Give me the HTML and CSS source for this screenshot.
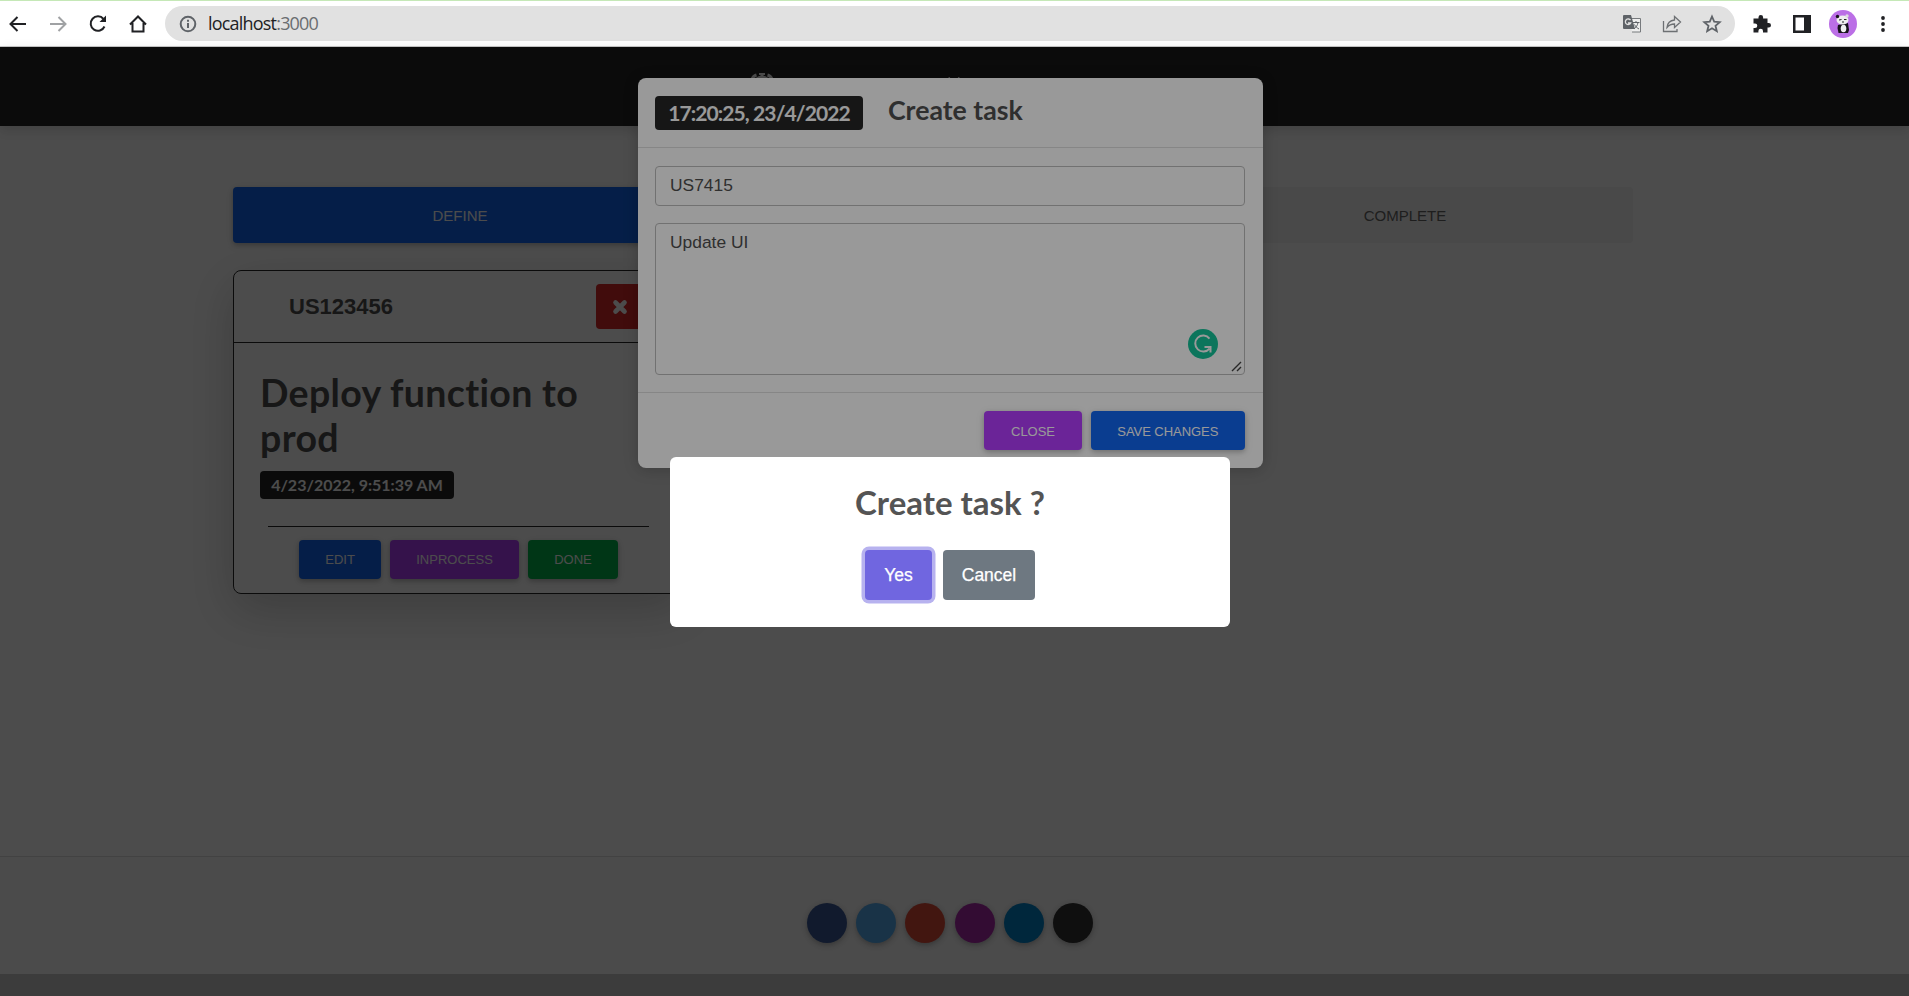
FILE: index.html
```html
<!DOCTYPE html>
<html lang="en">
<head>
<meta charset="utf-8">
<title>Task board</title>
<link rel="stylesheet" href="styles.css">
</head>
<body>
<header class="toolbar">
  <div class="nav-icons">
    <svg width="20" height="20" viewBox="0 0 20 20" class="ic"><path d="M18 10H3M9.500 3L2.500 10l7 7"/></svg>
    <svg width="20" height="20" viewBox="0 0 20 20" class="ic faded"><path d="M2 10h15M10.500 3l7 7-7 7"/></svg>
    <svg width="20" height="20" viewBox="0 0 20 20" class="ic"><path d="M16.500 12.500A7.200 7.200 0 1 1 15.500 5"/><path class="fill" d="M18 1.500V8h-6.500z"/></svg>
    <svg width="20" height="20" viewBox="0 0 20 20" class="ic"><path d="M2 10.500l8-8 8 8M4.500 9v8.500h11V9"/></svg>
  </div>
  <div class="address">
    <svg width="18" height="18" viewBox="0 0 18 18" class="ic grey"><circle cx="9" cy="9" r="7.300"/><path d="M9 8v5M9 4.800v2"/></svg>
    <span class="url">localhost<span class="port">:3000</span></span>
    <svg class="address-icon" width="20" height="20" viewBox="0 0 20 20"><path d="M8 4.500h10.500v13.500H10" fill="#eee" stroke="#777a7d"/><path d="M2 1h7l4 14H2a1 1 0 0 1-1-1V2a1 1 0 0 1 1-1z" fill="#5f6368"/><path d="M8.500 6.200A2.800 2.800 0 1 0 8.700 9H6" fill="none" stroke="#e1e1e1" stroke-width="1.300"/><path d="M11 8.500h6.500M14 7v1.500M16 8.500c-.5 3-2 5-4 6.500M12.500 10.500c1 2 2 3 4.500 4.500" fill="none" stroke="#5f6368"/></svg>
    <svg class="address-icon ic thin" width="20" height="20" viewBox="0 0 20 20"><path d="M1.500 7v10.500H15V15M5 13.500c.5-5 3-7 7.500-7.500V2.500L18.500 8l-6 5.500V10c-3.500 0-5.500 1-7.500 3.500z"/></svg>
    <svg class="address-icon ic grey" width="20" height="20" viewBox="0 0 20 20"><path stroke-width="1.800" d="M10 2.500l2.200 5.100 5.500.5-4.200 3.700 1.300 5.400L10 14.300l-4.800 2.900 1.300-5.400L2.300 8.100l5.500-.5z"/></svg>
  </div>
  <div class="ext-icons">
    <svg width="20" height="20" viewBox="0 0 20 20"><path fill="#202124" d="M2 4.500h4.500V3.300a2.300 2.300 0 0 1 4.600 0v1.200H15.500V9h1.200a2.300 2.300 0 0 1 0 4.600h-1.200V18.500H11V17a2.300 2.300 0 0 0-4.600 0v1.500H1.500V14H3a2.300 2.300 0 0 0 0-4.600H1.500V4.500z"/></svg>
    <svg width="20" height="20" viewBox="0 0 20 20"><path fill="#202124" fill-rule="evenodd" d="M1 1h18v18H1zM3.500 3.500v13h8.500v-13z"/></svg>
    <svg width="28" height="28" viewBox="0 0 28 28"><circle cx="14" cy="14" r="14" fill="#bb6fe6"/><path d="M9 15l10-2 1 7-1 3H9.500L8.500 18z" fill="#17131a"/><ellipse cx="13.500" cy="10" rx="6" ry="4.500" fill="#eee"/><circle cx="8.500" cy="6.500" r="1.700" fill="#17131a"/><circle cx="18" cy="6" r="1.700" fill="#ddd"/><ellipse cx="14.500" cy="18.500" rx="2.800" ry="3.800" fill="#f1f1f1"/><path d="M10 10l2.500-.5M15 9.500h2.500M13 12h2" stroke="#222"/></svg>
    <svg width="20" height="20" viewBox="0 0 20 20" fill="#202124"><circle cx="10" cy="4" r="1.900"/><circle cx="10" cy="10" r="1.900"/><circle cx="10" cy="16" r="1.900"/></svg>
  </div>
</header>

<div class="page">
  <nav class="navbar">
    <svg width="24" height="24" viewBox="0 0 24 24" fill="#fff"><path d="M9 0h6v2h-1.500v2h-3V2H9z"/><circle cx="12" cy="12" r="9.500"/><path d="M2 6A7 7 0 0 1 6.500 2M17.500 2A7 7 0 0 1 22 6" fill="none" stroke="#fff" stroke-width="3"/></svg>
    <svg width="16" height="14" viewBox="0 0 16 14"><path d="M3 0l3 7M13 0l-3 7" stroke="#fff" stroke-width="1.500"/></svg>
  </nav>
  <main class="board">
    <div class="tabs">
      <div class="tab active">DEFINE</div>
      <div class="tab">IN PROCESS</div>
      <div class="tab">COMPLETE</div>
    </div>
    <article class="card">
      <div class="card-header">
        <span class="card-id">US123456</span>
        <button class="delete"><svg width="16" height="16" viewBox="0 0 16 16"><path d="M3.500 3.500l9 9M12.500 3.500l-9 9" stroke="#fff" stroke-width="4.600" stroke-linecap="round"/></svg></button>
      </div>
      <div class="card-body">
        <h1 class="card-title">Deploy function to prod</h1>
        <span class="badge">4/23/2022, 9:51:39 AM</span>
        <div class="card-actions">
          <button class="btn primary">EDIT</button>
          <button class="btn secondary">INPROCESS</button>
          <button class="btn success">DONE</button>
        </div>
      </div>
    </article>
  </main>
  <footer class="footer">
    <div class="socials">
      <i class="dot facebook"></i><i class="dot twitter"></i><i class="dot google"></i><i class="dot instagram"></i><i class="dot linkedin"></i><i class="dot github"></i>
    </div>
    <div class="copyright"></div>
  </footer>

  <div class="backdrop">
    <section class="modal">
      <div class="modal-header">
        <span class="badge large">17:20:25, 23/4/2022</span>
        <h5 class="modal-title">Create task</h5>
      </div>
      <div class="modal-body">
        <div class="field">US7415</div>
        <div class="field area">Update UI
          <svg class="grammar" width="30" height="30" viewBox="0 0 30 30"><circle cx="15" cy="15" r="15" fill="#15c39a"/><path d="M21.500 9.500A8 8 0 1 0 21.500 19.500M16.500 18h6v5.500" fill="none" stroke="#fff" stroke-width="2"/></svg>
          <svg class="grip" width="11" height="11" viewBox="0 0 11 11"><path d="M1 10l9-9M6 10l4-4" stroke="#444" stroke-width="1.400"/></svg>
        </div>
      </div>
      <div class="modal-footer">
        <button class="btn secondary">CLOSE</button>
        <button class="btn primary">SAVE CHANGES</button>
      </div>
    </section>
  </div>

  <div class="confirm-layer">
    <section class="confirm">
      <h2 class="confirm-title">Create task ?</h2>
      <div class="confirm-actions">
        <button class="confirm-btn yes">Yes</button>
        <button class="confirm-btn cancel">Cancel</button>
      </div>
    </section>
  </div>
</div>
</body>
</html>
```
FILE: styles.css
```css
* { box-sizing: border-box; }
body { margin: 0; height: 996px; overflow: hidden; display: flex; flex-direction: column; background: #fff; color: #4f4f4f; font-family: "Liberation Sans", Arial, sans-serif; }
button { font-family: inherit; border: 0; padding: 0; margin: 0; }
svg { display: block; flex: none; }
h1, h2, h5 { margin: 0; font-family: Lato, sans-serif; font-variant-ligatures: none; }

.toolbar { flex: none; height: 47px; display: flex; align-items: center; border-top: 1px solid #c5e8b7; border-bottom: 1px solid #c8c8c8; }
.nav-icons { display: flex; gap: 20px; padding-left: 8px; width: 165px; }
.ic { fill: none; stroke: #202124; stroke-width: 2; }
.ic .fill { fill: #202124; stroke: none; }
.faded { stroke: #a0a2a4; }
.grey { stroke: #5f6368; }
.thin { stroke: #6d7073; stroke-width: 1.3; }
.address { width: 1570px; height: 35px; border-radius: 18px; background: #e1e1e1; display: flex; align-items: center; padding: 0 13px 0 14px; }
.url { flex: 1; margin-left: 11px; padding-bottom: 1px; font: 18px "Open Sans", sans-serif; letter-spacing: -.8px; color: #202124; }
.port { color: #6a6d70; }
.address-icon { margin-left: 20px; }
.ext-icons { display: flex; align-items: center; gap: 20px; padding-left: 17px; }
.ext-icons svg:nth-child(3) { margin: 0 -4px 0 -3px; }

.page { position: relative; flex: 1; display: flex; flex-direction: column; }
.navbar { height: 79px; background: #262626; box-shadow: 0 4px 12px rgba(0,0,0,.15); display: flex; gap: 172px; padding: 26px 0 0 750px; }
.navbar svg + svg { margin-top: 4px; }
.board { flex: 1; padding: 61px 276px 0 233px; }
.tabs { display: grid; grid-template-columns: repeat(3, 1fr); gap: 16px; margin-bottom: 27px; }
.tab { height: 56px; display: flex; align-items: center; justify-content: center; border-radius: 4px; background: #f5f5f5; color: #666; font-size: 15px; }
.tab.active { background: #1266f1; color: #fff; padding-right: 2px; box-shadow: 0 2px 5px rgba(0,0,0,.2), 0 2px 10px rgba(0,0,0,.1); }

.card { width: 452px; height: 324px; border: 1px solid #262626; border-radius: 8px; box-shadow: 0 16px 48px rgba(0,0,0,.2); }
.card-header { height: 72px; border-bottom: 1px solid #262626; display: flex; justify-content: space-between; align-items: center; padding: 0 40px 0 55px; }
.card-id { font-size: 22px; font-weight: 700; }
.delete { width: 48px; height: 45px; border-radius: 4px; background: #db2828; display: flex; justify-content: center; align-items: center; }
.card-body { padding: 27px 26px 0; }
.card-title { font-size: 37.5px; line-height: 45px; font-weight: 700; width: 350px; letter-spacing: .33px; }
.badge { display: inline-flex; align-items: center; justify-content: center; width: 194px; height: 28px; margin-top: 11px; padding-bottom: 1px; border-radius: 4px; background: #262626; color: #fff; font: 700 16px Lato, sans-serif; white-space: nowrap; }
.card-actions { width: 381px; margin: 27px 0 0 8px; border-top: 1px solid #262626; display: flex; justify-content: center; gap: 9px; padding-top: 13px; }
.btn { height: 39px; padding: 0 26.2px; border-radius: 4px; color: #fff; font-size: 13px; font-weight: 500; box-shadow: 0 2px 5px rgba(0,0,0,.2), 0 2px 10px rgba(0,0,0,.1); }
.primary { background: #1266f1; }
.secondary { background: #b23cfd; }
.success { background: #00b74a; }

.footer { height: 140px; border-top: 1px solid #dedede; background: #fbfbfb; display: flex; flex-direction: column; }
.socials { flex: 1; display: flex; justify-content: center; gap: 9.2px; padding: 46px 9px 0 0; }
.dot { width: 40px; height: 40px; border-radius: 50%; box-shadow: 0 2px 5px rgba(0,0,0,.2), 0 2px 10px rgba(0,0,0,.1); }
.facebook { background: #3b5998; }
.twitter { background: #55acee; }
.google { background: #dd4b39; }
.instagram { background: #ac2bac; }
.linkedin { background: #0082ca; }
.github { background: #333; }
.copyright { height: 22px; background: #cacaca; }

.backdrop { position: absolute; inset: 0; background: rgba(0,0,0,.5); padding: 31px 0 0 638px; }
.modal { width: 625px; height: 390px; background: #fff; border-radius: 8px; box-shadow: 0 2px 15px rgba(0,0,0,.2); }
.modal-header { height: 70px; border-bottom: 1px solid #e0e0e0; display: flex; padding: 18px 17px 0; }
.badge.large { width: 208px; height: 34px; margin: 0; padding-bottom: 2px; font-size: 21px; letter-spacing: -.9px; }
.modal-title { margin-left: 25px; font-size: 26.7px; line-height: 28px; font-weight: 700; }
.modal-body { padding: 18px 18px 17px 17px; display: flex; flex-direction: column; gap: 17px; }
.field { height: 40px; border: 1px solid #bdbdbd; border-radius: 4px; padding: 8px 14px; font-size: 17.4px; line-height: 21px; }
.area { position: relative; height: 152px; }
.grammar { position: absolute; right: 26px; bottom: 15px; }
.grip { position: absolute; right: 2px; bottom: 2px; }
.modal-footer { border-top: 1px solid #e0e0e0; display: flex; justify-content: flex-end; gap: 9px; padding: 18px 18px 0; }
.modal-footer .btn { letter-spacing: -.05px; padding: 1px 26.700px 0; }

.confirm-layer { position: absolute; inset: 0; background: rgba(0,0,0,.4); padding: 410px 0 0 670px; }
.confirm { width: 560px; height: 170px; border-radius: 6px; background: #fff; padding: 25px 0 0; }
.confirm-title { color: #545454; text-align: center; font-size: 33px; line-height: 40px; font-weight: 700; }
.confirm-actions { display: flex; justify-content: center; gap: 11px; margin: 28px 0 0; }
.confirm-btn { height: 50px; border-radius: 4px; color: #fff; font-size: 17.5px; font-weight: 500; -webkit-text-stroke: .25px #fff; }
.yes { width: 67px; background: #7066e0; box-shadow: 0 0 0 3.500px rgba(112,102,224,.5); }
.cancel { width: 92px; background: #6e7881; }
```
